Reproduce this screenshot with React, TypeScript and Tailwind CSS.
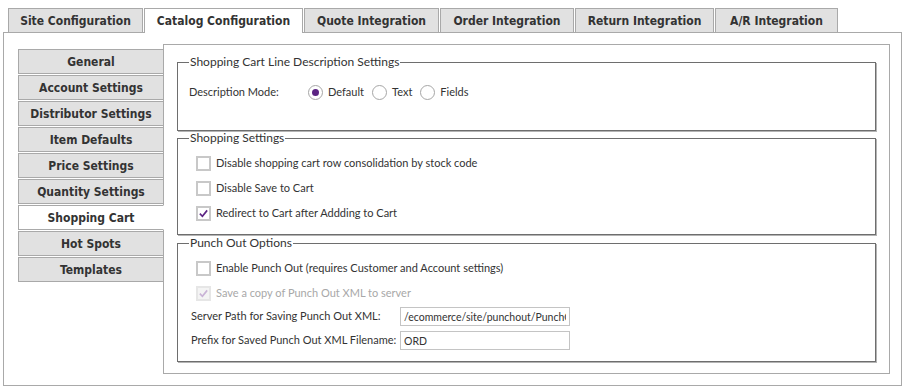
import { JSX } from "react";

const tabs = [
  { label: "Site Configuration", w: "w-[135px]" },
  { label: "Catalog Configuration", w: "w-[159px]", active: true },
  { label: "Quote Integration", w: "w-[135px]" },
  { label: "Order Integration", w: "w-[134px]" },
  { label: "Return Integration", w: "w-[139px]" },
  { label: "A/R Integration", w: "w-[123px]" },
];

const menu = [
  "General",
  "Account Settings",
  "Distributor Settings",
  "Item Defaults",
  "Price Settings",
  "Quantity Settings",
  "Shopping Cart",
  "Hot Spots",
  "Templates",
];

const boldFont = "font-['DejaVu_Sans_Condensed','DejaVu_Sans',sans-serif] font-bold";

function Radio({ label, checked = false }: { label: string; checked?: boolean }): JSX.Element {
  return (
    <label className="mr-[8px] flex items-center gap-[5px]">
      <span className="flex h-[15px] w-[15px] items-center justify-center rounded-full border border-[#a6a6a6] bg-white">
        {checked && <span className="h-[7px] w-[7px] rounded-full bg-[#5c2483]" />}
      </span>
      <span>{label}</span>
    </label>
  );
}

function Check({
  label,
  checked = false,
  disabled = false,
}: {
  label: string;
  checked?: boolean;
  disabled?: boolean;
}): JSX.Element {
  return (
    <div className={`flex h-[25px] items-center gap-[5px] pl-[7px] ${disabled ? "text-[#a8a8a8]" : ""}`}>
      <span
        className={`flex h-[15px] w-[15px] items-center justify-center border-2 ${
          disabled ? "border-[#e6e6e6] bg-[#f4f4f4]" : "border-[#c8c8c8] bg-white"
        }`}
      >
        {checked && (
          <svg viewBox="0 0 12 12" className="h-[11px] w-[11px]">
            <path
              d="M2 6.2 L4.8 9 L10 2.6"
              fill="none"
              stroke={disabled ? "#c9b3d6" : "#5c2483"}
              strokeWidth="1.8"
            />
          </svg>
        )}
      </span>
      <span className="whitespace-nowrap">{label}</span>
    </div>
  );
}

function Fieldset({
  legend,
  className,
  children,
}: {
  legend: string;
  className: string;
  children: React.ReactNode;
}): JSX.Element {
  return (
    <fieldset
      className={`m-0 w-[699px] border border-[#6e6e6e] px-[11px] pb-0 shadow-[1px_1px_0_#b4b4b4] ${className}`}
    >
      <legend className="px-[1px] text-[12px] leading-[14px]">{legend}</legend>
      {children}
    </fieldset>
  );
}

export default function App(): JSX.Element {
  return (
    <div className="h-[391px] w-[921px] bg-white pt-[8px] font-['Lato',sans-serif] text-[11px] text-[#333]">
      {/* Top tabs */}
      <div className="flex gap-[1px] pl-[8px]">
        {tabs.map((t) => (
          <div
            key={t.label}
            className={`${t.w} flex items-center justify-center border border-b-0 border-[#a9a9a9] text-[12px] text-[#333] ${boldFont} ${
              t.active ? "relative z-10 mb-[-1px] h-[25px] bg-white pb-[1px]" : "h-[24px] bg-[#e1e1e1]"
            }`}
          >
            {t.label}
          </div>
        ))}
      </div>

      {/* Outer panel */}
      <div className="ml-[3px] flex h-[354px] w-[899px] border border-[#a9a9a9] pl-[14px] pt-[11px]">
        {/* Side menu */}
        <div className="relative z-10 mr-[-1px] mt-[5px] flex w-[146px] flex-col gap-[1px]">
          {menu.map((m) => {
            const active = m === "Shopping Cart";
            return (
              <div
                key={m}
                className={`flex h-[25px] items-center justify-center border border-[#a9a9a9] text-[12px] text-[#333] ${boldFont} ${
                  active ? "border-r-white bg-white" : "bg-[#e1e1e1]"
                }`}
              >
                {m}
              </div>
            );
          })}
        </div>

        {/* Content panel */}
        <div className="h-[330px] w-[727px] border border-[#a9a9a9] pl-[13px] pt-[10px]">
          <Fieldset legend="Shopping Cart Line Description Settings" className="h-[76px]">
            <div className="mt-[13px] flex h-[20px] items-center">
              <span className="w-[119px]">Description Mode:</span>
              <Radio label="Default" checked />
              <Radio label="Text" />
              <Radio label="Fields" />
            </div>
          </Fieldset>

          <Fieldset legend="Shopping Settings" className="h-[104px]">
            <div className="pt-[6px]">
              <Check label="Disable shopping cart row consolidation by stock code" />
              <Check label="Disable Save to Cart" />
              <Check label="Redirect to Cart after Addding to Cart" checked />
            </div>
          </Fieldset>

          <Fieldset legend="Punch Out Options" className="mt-[1px] h-[126px]">
            <div className="pt-[6px]">
              <Check label="Enable Punch Out (requires Customer and Account settings)" />
              <Check label="Save a copy of Punch Out XML to server" checked disabled />
              <div className="mt-[1px] flex h-[19px] items-center pl-[2px]">
                <span className="w-[209px] whitespace-nowrap">Server Path for Saving Punch Out XML:</span>
                <input
                  readOnly
                  value="/ecommerce/site/punchout/PunchOut/"
                  className="h-[19px] w-[170px] border border-[#c4c4c4] px-[3px] text-[10.5px] text-[#333] outline-none"
                />
              </div>
              <div className="mt-[5px] flex h-[19px] items-center pl-[2px]">
                <span className="w-[209px] whitespace-nowrap">Prefix for Saved Punch Out XML Filename:</span>
                <input
                  readOnly
                  value="ORD"
                  className="h-[19px] w-[170px] border border-[#c4c4c4] px-[3px] text-[10.5px] text-[#333] outline-none"
                />
              </div>
            </div>
          </Fieldset>
        </div>
      </div>
    </div>
  );
}
